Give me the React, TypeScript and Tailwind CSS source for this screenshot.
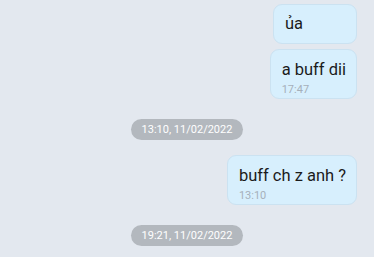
export default function App() {
    return (
        <div
            className="w-[374px] h-[257px] overflow-hidden bg-[#e3e8ef] flex flex-col pt-[4px]"
            style={{ fontFamily: "Roboto, 'Noto Sans', sans-serif" }}
        >
            <div className="flex flex-col items-end gap-[5px] pr-[17px]">
                <div className="min-w-[84px] h-[40px] rounded-[9px] border border-[#cbe2f1] bg-[#d7effd] px-[11px] pt-[8px] text-[16.5px] leading-[22px] text-[#1b1b1b]">
                    ủa
                </div>
                <div className="min-w-[84px] h-[50px] rounded-[9px] border border-[#cbe2f1] bg-[#d7effd] pl-[11px] pr-[10px] pt-[9px] text-[#1b1b1b]">
                    <p className="text-[16.5px] leading-[22px]">a buff dii</p>
                    <p className="mt-[2px] text-[11px] leading-[14px] text-[#a6b0ba]">17:47</p>
                </div>
            </div>

            <div className="flex justify-center mt-[20px]">
                <span className="w-[112px] h-[21px] rounded-full bg-[#b3b8be] text-white text-[11px] leading-[21px] text-center">
                    13:10, 11/02/2022
                </span>
            </div>

            <div className="flex justify-end pr-[17px] mt-[15px]">
                <div className="min-w-[84px] h-[50px] rounded-[9px] border border-[#cbe2f1] bg-[#d7effd] pl-[11px] pr-[10px] pt-[9px] text-[#1b1b1b]">
                    <p className="text-[16.5px] leading-[22px]">buff ch z anh ?</p>
                    <p className="mt-[2px] text-[11px] leading-[14px] text-[#a6b0ba]">13:10</p>
                </div>
            </div>

            <div className="flex justify-center mt-[20px]">
                <span className="w-[112px] h-[21px] rounded-full bg-[#b3b8be] text-white text-[11px] leading-[21px] text-center">
                    19:21, 11/02/2022
                </span>
            </div>
        </div>
    )
}
